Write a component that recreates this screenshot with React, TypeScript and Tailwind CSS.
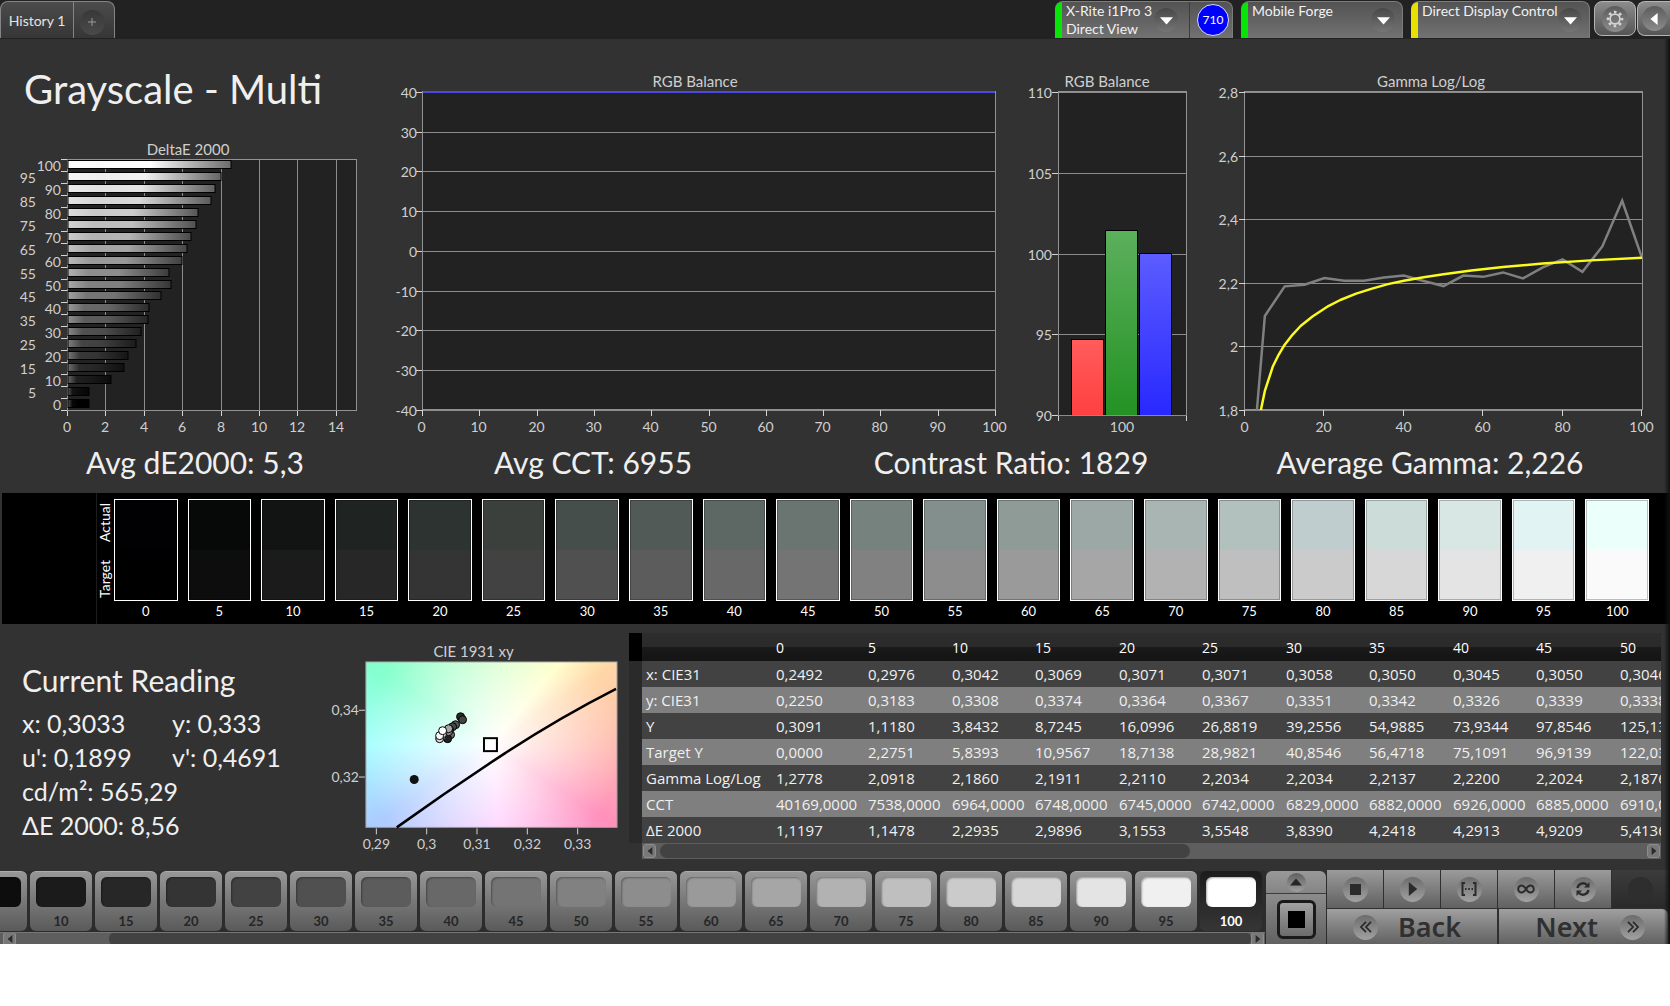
import React from "react";

type Patch = { level: number; actual: string; target: string; delta: number };

const PATCHES: Patch[] = [
  { level: 0, actual: "#010103", target: "#000000", delta: 1.12 },
  { level: 5, actual: "#070808", target: "#0d0d0d", delta: 1.15 },
  { level: 10, actual: "#111413", target: "#1b1b1b", delta: 2.29 },
  { level: 15, actual: "#1f2322", target: "#272727", delta: 2.99 },
  { level: 20, actual: "#2d3331", target: "#353434", delta: 3.16 },
  { level: 25, actual: "#3b403c", target: "#434242", delta: 3.6 },
  { level: 30, actual: "#464e4b", target: "#505050", delta: 3.87 },
  { level: 35, actual: "#525a57", target: "#5c5c5c", delta: 4.24 },
  { level: 40, actual: "#5d6764", target: "#686868", delta: 4.29 },
  { level: 45, actual: "#6a7571", target: "#747474", delta: 4.92 },
  { level: 50, actual: "#76827e", target: "#818181", delta: 5.44 },
  { level: 55, actual: "#828f8c", target: "#8d8d8d", delta: 5.3 },
  { level: 60, actual: "#8e9b97", target: "#9a9a9a", delta: 6.0 },
  { level: 65, actual: "#9ba8a5", target: "#a6a6a6", delta: 6.27 },
  { level: 70, actual: "#a8b5b2", target: "#b2b2b2", delta: 6.47 },
  { level: 75, actual: "#b3c1be", target: "#bfbfbf", delta: 6.7 },
  { level: 80, actual: "#c0cdce", target: "#cbcbcb", delta: 6.8 },
  { level: 85, actual: "#ccdcd9", target: "#d7d7d7", delta: 7.48 },
  { level: 90, actual: "#d8e7e4", target: "#e4e4e4", delta: 7.72 },
  { level: 95, actual: "#e1f3f2", target: "#f0f0f0", delta: 8.0 },
  { level: 100, actual: "#ebfffb", target: "#fafafa", delta: 8.56 },
];

const COLUMNS = ["0", "5", "10", "15", "20", "25", "30", "35", "40", "45", "50"];

const ROWS: { name: string; values: string[] }[] = [
  { name: "x: CIE31", values: ["0,2492", "0,2976", "0,3042", "0,3069", "0,3071", "0,3071", "0,3058", "0,3050", "0,3045", "0,3050", "0,3046"] },
  { name: "y: CIE31", values: ["0,2250", "0,3183", "0,3308", "0,3374", "0,3364", "0,3367", "0,3351", "0,3342", "0,3326", "0,3339", "0,3338"] },
  { name: "Y", values: ["0,3091", "1,1180", "3,8432", "8,7245", "16,0996", "26,8819", "39,2556", "54,9885", "73,9344", "97,8546", "125,1354"] },
  { name: "Target Y", values: ["0,0000", "2,2751", "5,8393", "10,9567", "18,7138", "28,9821", "40,8546", "56,4718", "75,1091", "96,9139", "122,0321"] },
  { name: "Gamma Log/Log", values: ["1,2778", "2,0918", "2,1860", "2,1911", "2,2110", "2,2034", "2,2034", "2,2137", "2,2200", "2,2024", "2,1876"] },
  { name: "CCT", values: ["40169,0000", "7538,0000", "6964,0000", "6748,0000", "6745,0000", "6742,0000", "6829,0000", "6882,0000", "6926,0000", "6885,0000", "6910,0000"] },
  { name: "ΔE 2000", values: ["1,1197", "1,1478", "2,2935", "2,9896", "3,1553", "3,5548", "3,8390", "4,2418", "4,2913", "4,9209", "5,4136"] },
];

const TITLE = "fill-[#cfcfcf] text-[15px]";
const AXIS = "fill-[#cfcfcf] text-[14px]";
const GRID = "stroke-[#8c8c8c]";
const TICK = "stroke-[#d4d4d4]";
const PLOT = "fill-[#222222] stroke-[#929292]";

function grey(v: number) {
  const c = Math.round(Math.max(0, Math.min(255, v)));
  return `rgb(${c},${c},${c})`;
}

function DeltaChart() {
  const rows = [...PATCHES].reverse();
  const x = (v: number) => 67 + v * 19.2;
  const pitch = 251 / 21;
  return (
    <svg viewBox="0 0 390 308" className="block w-full" role="img" aria-label="DeltaE 2000">
      <defs>
        {rows.map((r) => {
          const v = r.level * 2.55;
          return (
            <linearGradient key={r.level} id={`delta-${r.level}`}>
              <stop offset="0" stopColor={grey(v * 0.66 + 85)} />
              <stop offset="0.2" stopColor={grey(v * 0.95 + 8)} />
              <stop offset="0.5" stopColor={grey(v)} />
              <stop offset="1" stopColor={grey(v * 0.42)} />
            </linearGradient>
          );
        })}
      </defs>
      <text x="188" y="23" textAnchor="middle" className={TITLE}>DeltaE 2000</text>
      <rect x="67.5" y="27.5" width="289" height="251" className={PLOT} />
      {[2, 4, 6, 8, 10, 12, 14].map((v) => (
        <line key={v} x1={Math.round(x(v)) + 0.5} x2={Math.round(x(v)) + 0.5} y1="28" y2="278" className={GRID} />
      ))}
      {[0, 2, 4, 6, 8, 10, 12, 14].map((v) => (
        <g key={v}>
          <line x1={Math.round(x(v)) + 0.5} x2={Math.round(x(v)) + 0.5} y1="279" y2="284" className={TICK} />
          <text x={Math.round(x(v))} y="300" textAnchor="middle" className={AXIS}>{v}</text>
        </g>
      ))}
      {rows.map((r, i) => {
        const top = Math.round(27 + i * pitch);
        return (
          <g key={r.level}>
            <line x1="61" x2="67" y1={top + 0.5} y2={top + 0.5} className={TICK} />
            <rect x="68" y={top + 1.5} width={Math.round(x(r.delta)) - 68} height="8" fill={`url(#delta-${r.level})`} className="stroke-black" />
            <text x={i % 2 ? 36 : 61} y={top + 12} textAnchor="end" className={AXIS}>{r.level}</text>
          </g>
        );
      })}
      <line x1="61" x2="67" y1="278.5" y2="278.5" className={TICK} />
    </svg>
  );
}

function BalanceLineChart() {
  const ys = [40, 30, 20, 10, 0, -10, -20, -30, -40];
  return (
    <svg viewBox="0 0 620 370" className="block w-full" role="img" aria-label="RGB Balance">
      <text x="305" y="17" textAnchor="middle" className={TITLE}>RGB Balance</text>
      <rect x="32.5" y="21.5" width="573" height="318" className={PLOT} />
      {ys.map((v, i) => {
        const y = Math.round(22 + i * 39.7) + 0.5;
        return (
          <g key={v}>
            <line x1="33" x2="605" y1={y} y2={y} className={GRID} />
            <line x1="26" x2="32" y1={y} y2={y} className={TICK} />
            <text x="27" y={y + 5} textAnchor="end" className={AXIS}>{v}</text>
          </g>
        );
      })}
      <line x1="33" x2="605" y1="22" y2="22" strokeWidth="2" className="stroke-[#4a4ae0]" />
      {[0, 10, 20, 30, 40, 50, 60, 70, 80, 90, 100].map((v) => {
        const x = Math.round(32 + v * 5.73) + 0.5;
        return (
          <g key={v}>
            <line x1={x} x2={x} y1="340" y2="346" className={TICK} />
            <text x={x - 1} y="362" textAnchor="middle" className={AXIS}>{v}</text>
          </g>
        );
      })}
    </svg>
  );
}

function BalanceBarChart() {
  const bars = [
    { id: "red", from: "#ff5c5c", to: "#ff4040", x: 61, y: 269 },
    { id: "green", from: "#5cb05c", to: "#239223", x: 95, y: 160 },
    { id: "blue", from: "#5c5cff", to: "#2828ff", x: 129, y: 183 },
  ];
  return (
    <svg viewBox="0 0 190 370" className="block w-full" role="img" aria-label="RGB Balance at 100">
      <defs>
        {bars.map((b) => (
          <linearGradient key={b.id} id={`bar-${b.id}`} x1="0" y1="0" x2="0" y2="1">
            <stop offset="0" stopColor={b.from} />
            <stop offset="1" stopColor={b.to} />
          </linearGradient>
        ))}
      </defs>
      <text x="97" y="17" textAnchor="middle" className={TITLE}>RGB Balance</text>
      <rect x="48.5" y="21.5" width="128" height="324" className={PLOT} />
      {[110, 105, 100, 95, 90].map((v, i) => {
        const y = Math.round(22 + i * 80.8) + 0.5;
        return (
          <g key={v}>
            <line x1="49" x2="176" y1={y} y2={y} className={GRID} />
            <line x1="42" x2="48" y1={y} y2={y} className={TICK} />
            <text x="42" y={y + 5} textAnchor="end" className={AXIS}>{v}</text>
          </g>
        );
      })}
      {bars.map((b) => (
        <rect key={b.id} x={b.x + 0.5} y={b.y + 0.5} width="32" height={345 - b.y} fill={`url(#bar-${b.id})`} className="stroke-black" />
      ))}
      <line x1="48" x2="177" y1="345.5" y2="345.5" className={GRID} />
      <line x1="48.5" x2="48.5" y1="346" y2="351" className={TICK} />
      <line x1="176.5" x2="176.5" y1="346" y2="351" className={TICK} />
      <text x="112" y="362" textAnchor="middle" className={AXIS}>100</text>
    </svg>
  );
}

const MEASURED: [number, number][] = [
  [3, 1.8], [5, 2.0965], [10, 2.19], [15, 2.195], [20, 2.216], [25, 2.208], [30, 2.208], [35, 2.218], [40, 2.224], [45, 2.207],
  [50, 2.191], [55, 2.224], [60, 2.22], [65, 2.234], [70, 2.215], [75, 2.25], [80, 2.275], [85, 2.236], [90, 2.316], [95, 2.46], [100, 2.28],
];
const TARGET: [number, number][] = [
  [4, 1.8], [5, 1.86], [7, 1.937], [8.5, 1.975], [10, 2.006], [12, 2.038], [14, 2.065], [17, 2.095], [21, 2.128], [24, 2.147], [28, 2.167],
  [32, 2.183], [36, 2.197], [40, 2.208], [45, 2.219], [50, 2.228], [57, 2.24], [65, 2.251], [75, 2.262], [87, 2.272], [100, 2.28],
];

function GammaChart() {
  const px = (p: number) => 45 + p * 3.97;
  const py = (v: number) => 23 + (2.8 - v) * 317;
  const path = (pts: [number, number][]) => pts.map(([a, b]) => `${px(a)},${py(b)}`).join(" ");
  return (
    <svg viewBox="0 0 470 370" className="block w-full" role="img" aria-label="Gamma Log/Log">
      <text x="231" y="17" textAnchor="middle" className={TITLE}>Gamma Log/Log</text>
      <rect x="44.5" y="21.5" width="398" height="318" className={PLOT} />
      {["2,8", "2,6", "2,4", "2,2", "2", "1,8"].map((v, i) => {
        const y = Math.round(22 + i * 63.5) + 0.5;
        return (
          <g key={v}>
            <line x1="45" x2="442" y1={y} y2={y} className={GRID} />
            <line x1="39" x2="45" y1={y} y2={y} className={TICK} />
            <text x="38" y={y + 5} textAnchor="end" className={AXIS}>{v}</text>
          </g>
        );
      })}
      {[0, 20, 40, 60, 80, 100].map((v) => {
        const x = Math.round(px(v)) - 0.5;
        return (
          <g key={v}>
            <line x1={x} x2={x} y1="340" y2="346" className={TICK} />
            <text x={x} y="362" textAnchor="middle" className={AXIS}>{v}</text>
          </g>
        );
      })}
      <polyline points={path(MEASURED)} fill="none" strokeWidth="2.5" className="stroke-[#808080]" />
      <polyline points={path(TARGET)} fill="none" strokeWidth="2.5" strokeLinejoin="round" className="stroke-[#fbfb1e]" />
    </svg>
  );
}

function CieChart() {
  const dots: [number, number, string][] = [
    [131, 77, "#2a2a2a"], [133, 80, "#444444"], [126, 85, "#555555"], [123, 87, "#4a4a4a"], [120, 90, "#606060"],
    [121, 95, "#707070"], [118, 99, "#222222"], [119, 92, "#8a8a8a"], [119, 89, "#a8a8a8"], [112, 97, "#bbbbbb"], [110, 99, "#dddddd"],
    [113, 94, "#eeeeee"], [110, 96, "#f8f8f8"], [113, 91, "#ffffff"],
  ];
  return (
    <svg viewBox="0 0 300 215" className="block w-full" role="img" aria-label="CIE 1931 xy">
      <text x="144" y="17" textAnchor="middle" className={TITLE}>CIE 1931 xy</text>
      <foreignObject x="36" y="22" width="252" height="166">
        <div className="h-full w-full bg-[radial-gradient(circle_at_center,#ffffff_0px,#ffffff00_130px),conic-gradient(from_0deg_at_50%_50%,#c8ffc4_0deg,#ffffc0_40deg,#ffd6a6_57deg,#ffbcb0_90deg,#ff90bc_123deg,#ffc4ff_175deg,#acccff_236deg,#a6ffff_270deg,#84ffce_303deg,#c8ffc4_360deg)]" />
      </foreignObject>
      <rect x="36" y="22" width="252" height="166" fill="none" className="stroke-[#a0a0a0]" />
      <path d="M67 188 Q120 150 175 114 T287 49" fill="none" strokeWidth="2.5" className="stroke-black" />
      {[["0,34", 70], ["0,32", 137]].map(([t, y]) => (
        <g key={t}>
          <line x1="29" x2="35" y1={Number(y) + 0.5} y2={Number(y) + 0.5} className={TICK} />
          <text x="29" y={Number(y) + 5} textAnchor="end" className={AXIS}>{t}</text>
        </g>
      ))}
      {["0,29", "0,3", "0,31", "0,32", "0,33"].map((t, i) => (
        <g key={t}>
          <line x1={46.5 + i * 50.5} x2={46.5 + i * 50.5} y1="189" y2="195" className={TICK} />
          <text x={46.5 + i * 50.5} y="210" textAnchor="middle" className={AXIS}>{t}</text>
        </g>
      ))}
      <circle cx="84.5" cy="140" r="4.5" className="fill-[#111]" />
      {dots.map(([x, y, c], i) => (
        <circle key={i} cx={x} cy={y} r="4" fill={c} className="stroke-black" />
      ))}
      <rect x="154.5" y="98.5" width="13" height="13" fill="none" strokeWidth="2" className="stroke-black" />
    </svg>
  );
}

function Triangle({ dir, className }: { dir: "left" | "right" | "up" | "down"; className: string }) {
  const d = { left: "M8 0 L2 5 L8 10Z", right: "M2 0 L8 5 L2 10Z", up: "M0 8 L5 2 L10 8Z", down: "M0 2.5 L10 2.5 L5 8Z" }[dir];
  return (
    <svg viewBox="0 0 10 10" className={className} aria-hidden="true">
      <path d={d} fill="currentColor" />
    </svg>
  );
}

function Knob({ children }: { children?: React.ReactNode }) {
  return (
    <span className="flex size-[25px] shrink-0 items-center justify-center rounded-full bg-gradient-to-b from-[#6c6c6c] to-[#a2a2a2] text-[#2b2b2b]">
      {children}
    </span>
  );
}

function DeviceTab({ lines, accent, width, children }: { lines: string[]; accent: string; width: string; children?: React.ReactNode }) {
  return (
    <div className={`flex h-[37px] shrink-0 overflow-hidden rounded-t-lg border-t border-r border-[#7c7c7c] bg-gradient-to-b from-[#535353] to-[#727272] ${width}`}>
      <span className={`w-[7px] shrink-0 ${accent}`} />
      <button type="button" aria-haspopup="listbox" className="flex min-w-0 flex-1 items-start justify-between pr-[7px] pl-1 text-left text-[14px] leading-[18px] text-[#f2f2f2]">
        <span className="whitespace-nowrap">
          {lines.map((l) => (
            <span key={l} className="block">{l}</span>
          ))}
        </span>
        <span className="mt-[6px] flex size-6 shrink-0 items-center justify-center rounded-full bg-gradient-to-b from-[#484848] to-[#757575]">
          <Triangle dir="down" className="size-[13px] text-white" />
        </span>
      </button>
      {children}
    </div>
  );
}

function ScrollBar({ label, children, className }: { label: string; children: React.ReactNode; className: string }) {
  return (
    <div className={`flex items-center overflow-hidden bg-[#5e5e5e] ${className}`} role="group" aria-label={label}>
      <button type="button" aria-label="Scroll left" className="flex h-[14px] w-[13px] shrink-0 items-center justify-center rounded-[3px] border border-[#8c8c8c] bg-[#787878] text-[#2a2a2a]">
        <Triangle dir="left" className="h-[10px] w-2" />
      </button>
      {children}
      <button type="button" aria-label="Scroll right" className="flex h-[14px] w-[13px] shrink-0 items-center justify-center rounded-[3px] border border-[#8c8c8c] bg-[#787878] text-[#2a2a2a]">
        <Triangle dir="right" className="h-[10px] w-2" />
      </button>
    </div>
  );
}

const TOOL = "flex h-[38px] items-center justify-center bg-gradient-to-b from-[#9b9b9b] to-[#616161]";

export default function App() {
  return (
    <div className="min-h-screen w-full bg-white font-['Lato',sans-serif]">
      <div className="relative overflow-hidden bg-[#323232]">
        <header className="flex h-[39px] justify-between bg-[#222222] pt-px">
          <div className="flex h-[37px] overflow-hidden rounded-t-lg border border-b-0 border-[#858585] bg-gradient-to-b from-[#4c4c4c] to-[#363636]">
            <button type="button" className="w-[73px] border-r border-[#858585] text-[14px] whitespace-nowrap text-[#e4e4e4]">History 1</button>
            <button type="button" aria-label="Add history tab" className="flex w-10 items-center justify-center pt-1 pr-1">
              <span className="flex size-[25px] items-center justify-center rounded-full bg-gradient-to-b from-[#383838] to-[#4a4a4a] text-[#9a9a9a]">
                <svg viewBox="0 0 8 8" className="size-2" aria-hidden="true"><path d="M4 0V8M0 4H8" stroke="currentColor" /></svg>
              </span>
            </button>
          </div>
          <div className="flex">
            <DeviceTab lines={["X-Rite i1Pro 3", "Direct View"]} accent="bg-[#06e606]" width="w-[178px]">
              <div className="ml-1 flex w-[43px] items-center justify-center border-l border-[#3c3c3c] pl-2 pr-1">
                <span className="flex size-8 shrink-0 items-center justify-center rounded-full border border-[#dcdcff] bg-[#0000ff] text-[12px] text-white">710</span>
              </div>
            </DeviceTab>
            <div className="w-2" />
            <DeviceTab lines={["Mobile Forge"]} accent="bg-[#06e606]" width="w-[162px]" />
            <div className="w-2" />
            <DeviceTab lines={["Direct Display Control"]} accent="bg-[#e8e000]" width="w-[179px]" />
            <button type="button" aria-label="Settings" className="ml-1 flex h-[35px] w-[42px] items-center justify-center rounded-lg border border-[#b4b4b4] bg-gradient-to-b from-[#8c8c8c] to-[#555555]">
              <span className="flex size-[26px] items-center justify-center rounded-full bg-gradient-to-b from-[#5c5c5c] to-[#8c8c8c] text-[#d4d4d4]">
                <svg viewBox="0 0 20 20" className="size-[18px]" fill="none" stroke="currentColor" aria-hidden="true">
                  <circle cx="10" cy="10" r="5.5" strokeWidth="2" />
                  <circle cx="10" cy="10" r="7.8" strokeWidth="2.8" strokeDasharray="2.9 3.226" strokeDashoffset="1.45" />
                </svg>
              </span>
            </button>
            <button type="button" aria-label="Collapse panel" className="ml-px flex h-[35px] w-[33px] items-center justify-center rounded-l-lg border border-r-0 border-[#b4b4b4] bg-gradient-to-b from-[#8c8c8c] to-[#555555]">
              <span className="flex size-[25px] items-center justify-center rounded-full bg-gradient-to-b from-[#5c5c5c] to-[#8c8c8c]">
                <Triangle dir="left" className="h-[14px] w-3 text-white" />
              </span>
            </button>
          </div>
        </header>

        <main className="text-[#efefef]">
          <section className="grid grid-cols-[390fr_620fr_190fr_470fr] pt-[31px]">
            <div className="min-w-0">
              <h1 className="pl-6 text-[40px] leading-[38px] whitespace-nowrap">Grayscale - Multi</h1>
              <div className="mt-6">
                <DeltaChart />
              </div>
            </div>
            <BalanceLineChart />
            <BalanceBarChart />
            <GammaChart />
          </section>

          <section className="grid grid-cols-[390fr_406fr_430fr_408fr] pr-9 pb-[9px] text-center text-[30px] leading-[44px] whitespace-nowrap">
            <p>Avg dE2000: 5,3</p>
            <p>Avg CCT: 6955</p>
            <p>Contrast Ratio: 1829</p>
            <p>Average Gamma: 2,226</p>
          </section>

          <section className="ml-0.5 flex h-[131px] bg-black pr-4 text-[13px] text-white">
            <div className="w-[95px] shrink-0 border-r border-[#1c1c1c]" />
            <div className="flex w-3 shrink-0 flex-col pt-1">
              <span className="flex h-[51px] rotate-180 justify-center text-[14px] leading-4 [writing-mode:vertical-rl]">Actual</span>
              <span className="mt-1 flex h-[54px] rotate-180 justify-center text-[14px] leading-4 [writing-mode:vertical-rl]">Target</span>
            </div>
            <ul className="grid flex-1 grid-cols-[repeat(21,minmax(0,1fr))] pt-1.5">
              {PATCHES.map((p) => (
                <li key={p.level} className="px-[5px] text-center">
                  <div className="h-[102px] border border-white">
                    <div
                      className="h-full border border-black/25 bg-origin-border"
                      style={{ backgroundImage: `linear-gradient(${p.actual} 50%, ${p.target} 50%)` }}
                    />
                  </div>
                  <div className="leading-5">{p.level}</div>
                </li>
              ))}
            </ul>
          </section>

          <section className="flex pt-[9px] pr-[9px]">
            <div className="w-[330px] shrink-0 pt-[27px] pl-[22px] text-[25px] leading-[34px] whitespace-nowrap">
              <h2 className="mb-1.5 text-[30px] leading-10">Current Reading</h2>
              <div className="grid grid-cols-[150px_1fr]"><p>x: 0,3033</p><p>y: 0,333</p></div>
              <div className="grid grid-cols-[150px_1fr]"><p>u': 0,1899</p><p>v': 0,4691</p></div>
              <p>cd/m²: 565,29</p>
              <p>ΔE 2000: 8,56</p>
            </div>
            <div className="w-[299px] shrink-0 pt-[7px]">
              <CieChart />
            </div>
            <div className="min-w-0 flex-1">
              <div className="overflow-hidden">
                <table className="w-[1068px] table-fixed border-collapse text-left font-['Open_Sans',sans-serif] text-[15px] whitespace-nowrap text-[#f0f0f0]">
                  <colgroup>
                    <col className="w-[13px]" />
                    <col className="w-[129px]" />
                    <col className="w-[92px]" />
                    {COLUMNS.slice(1).map((c) => (
                      <col key={c} className="odd:w-[83px] even:w-[84px]" />
                    ))}
                  </colgroup>
                  <thead>
                    <tr className="h-7 bg-[linear-gradient(#2d2d2d_0px,#2a2a2a_14px,#1a1a1a_14px,#141414_28px)]">
                      <td className="bg-black p-0" />
                      <th scope="col" aria-label="Measurement" className="p-0" />
                      {COLUMNS.map((c) => (
                        <th key={c} scope="col" className="py-0 pr-0 pl-[5px] text-[14px] font-normal text-white">{c}</th>
                      ))}
                    </tr>
                  </thead>
                  <tbody>
                    {ROWS.map((r) => (
                      <tr key={r.name} className="h-[26px] odd:bg-[#424242] even:bg-[#7f7f7f]">
                        <td className="bg-[#2a2a2a] p-0" />
                        <th scope="row" className="p-0 pl-1 leading-5 font-normal">{r.name}</th>
                        {r.values.map((v, i) => (
                          <td key={i} className="p-0 pl-[5px] leading-5">{v}</td>
                        ))}
                      </tr>
                    ))}
                  </tbody>
                </table>
              </div>
              <ScrollBar label="Table scroll" className="ml-[13px] h-4 px-px">
                <span className="ml-1 h-[14px] w-[530px] rounded-full bg-[#424242]" />
                <span className="flex-1" />
              </ScrollBar>
            </div>
          </section>

          <footer className="mt-2 flex h-[77px] items-start pr-0.5">
            <div className="mt-1 min-w-0 flex-1 overflow-hidden bg-[#2c2c2c]">
              <div className="flex h-[61px] justify-end gap-[3px] overflow-hidden pr-[3px]">
                {PATCHES.slice(1).map((p) => {
                  const active = p.level === 100;
                  return (
                    <button
                      key={p.level}
                      type="button"
                      aria-pressed={active}
                      className={
                        active
                          ? "flex h-[60px] w-[62px] shrink-0 flex-col items-center rounded-md bg-gradient-to-b from-[#1c1c1c] to-[#363636] pt-1.5 text-[13px] leading-7 font-bold text-white"
                          : "flex h-[60px] w-[62px] shrink-0 flex-col items-center rounded-md border-t border-[#ababab] bg-gradient-to-b from-[#979797] to-[#5a5a5a] pt-[5px] text-[13px] leading-7 font-bold text-[#262626]"
                      }
                    >
                      <span className="h-[30px] w-[50px] shrink-0 rounded-md shadow-[inset_1px_1px_2px_#00000055]" style={{ backgroundColor: p.level === 100 ? "#ffffff" : p.target }} />
                      {p.level}
                    </button>
                  );
                })}
              </div>
              <ScrollBar label="Patch scroll" className="h-[13px] border-t border-[#777777] pr-px pl-[3px]">
                <span className="w-[93px] shrink-0" />
                <span className="h-4 flex-1 rounded-full bg-[#424242]" />
              </ScrollBar>
            </div>

            <div className="mt-1 flex h-[74px] w-[62px] shrink-0 flex-col border-x border-[#2c2c2c]">
              <button type="button" aria-label="Expand patches" className="flex h-[23px] w-full items-center justify-center rounded-t-md border-b border-[#3c3c3c] bg-gradient-to-b from-[#999999] to-[#858585]">
                <span className="flex size-[19px] items-center justify-center rounded-full bg-gradient-to-b from-[#606060] to-[#a0a0a0] text-[#262626]">
                  <Triangle dir="up" className="size-3" />
                </span>
              </button>
              <button type="button" aria-label="Pattern window" className="flex w-full flex-1 items-center justify-center bg-gradient-to-b from-[#8c8c8c] to-[#606060]">
                <span className="flex size-[39px] items-center justify-center rounded-md border-[3px] border-[#1a1a1a] bg-gradient-to-b from-[#a2a2a2] to-[#6c6c6c]">
                  <span className="size-[17px] bg-black" />
                </span>
              </button>
            </div>

            <div className="mt-[3px] w-[341px] shrink-0 bg-[#303030]">
              <div className="grid grid-cols-6 gap-px">
                <button type="button" aria-label="Stop" className={TOOL}>
                  <Knob><span className="size-[11px] bg-current" /></Knob>
                </button>
                <button type="button" aria-label="Play" className={TOOL}>
                  <Knob><Triangle dir="right" className="ml-0.5 size-[14px]" /></Knob>
                </button>
                <button type="button" aria-label="Range" className={TOOL}>
                  <Knob>
                    <svg viewBox="0 0 16 14" className="h-[14px] w-4" fill="none" stroke="currentColor" strokeWidth="2" aria-hidden="true">
                      <path d="M4 1H1.5V13H4M12 1H14.5V13H12M4 7H5.5M7.2 7H8.8M10.5 7H12" />
                    </svg>
                  </Knob>
                </button>
                <button type="button" aria-label="Loop" className={TOOL}>
                  <Knob>
                    <svg viewBox="0 0 18 10" className="h-[10px] w-[18px]" fill="none" stroke="currentColor" strokeWidth="2" aria-hidden="true">
                      <path d="M9 5C7.5 2.5 6.3 1.5 4.7 1.5A3.5 3.5 0 0 0 4.7 8.5C6.3 8.5 7.5 7.5 9 5S11.7 1.5 13.3 1.5A3.5 3.5 0 0 1 13.3 8.5C11.7 8.5 10.5 7.5 9 5Z" />
                    </svg>
                  </Knob>
                </button>
                <button type="button" aria-label="Refresh" className={TOOL}>
                  <Knob>
                    <svg viewBox="0 0 16 16" className="size-4" fill="none" stroke="currentColor" strokeWidth="2.4" aria-hidden="true">
                      <path d="M2.5 7A5.6 5.6 0 0 1 12 4M13.5 9A5.6 5.6 0 0 1 4 12" />
                      <path d="M14.5 1V6.5H9ZM1.5 15V9.5H7Z" fill="currentColor" stroke="none" />
                    </svg>
                  </Knob>
                </button>
                <div className="flex h-[38px] items-center justify-center bg-gradient-to-b from-[#3c3c3c] to-[#2a2a2a]">
                  <span className="size-[25px] rounded-full bg-[#2e2e2e]" />
                </div>
              </div>
              <div className="mt-px grid h-9 grid-cols-2 gap-0.5 font-['Noto_Sans',sans-serif] text-[27px] leading-8 font-semibold text-[#303030]">
                <button type="button" className="flex items-center gap-5 bg-gradient-to-b from-[#a0a0a0] to-[#606060] pl-[26px]">
                  <Knob><Chevrons flip /></Knob>
                  Back
                </button>
                <button type="button" className="flex items-center justify-end gap-[22px] rounded-tr-md bg-gradient-to-b from-[#a0a0a0] to-[#606060] pr-[23px]">
                  Next
                  <Knob><Chevrons /></Knob>
                </button>
              </div>
            </div>
          </footer>
        </main>
        <div className="pointer-events-none absolute top-[39px] right-0 bottom-0 w-1.5 bg-gradient-to-r from-transparent to-[#101010]" />
      </div>
    </div>
  );
}

function Chevrons({ flip = false }: { flip?: boolean }) {
  return (
    <svg viewBox="0 0 14 12" className={flip ? "h-3 w-[14px] rotate-180" : "h-3 w-[14px]"} fill="none" stroke="currentColor" strokeWidth="1.8" aria-hidden="true">
      <path d="M2 0.8L7 6L2 11.2M7 0.8L12 6L7 11.2" />
    </svg>
  );
}
